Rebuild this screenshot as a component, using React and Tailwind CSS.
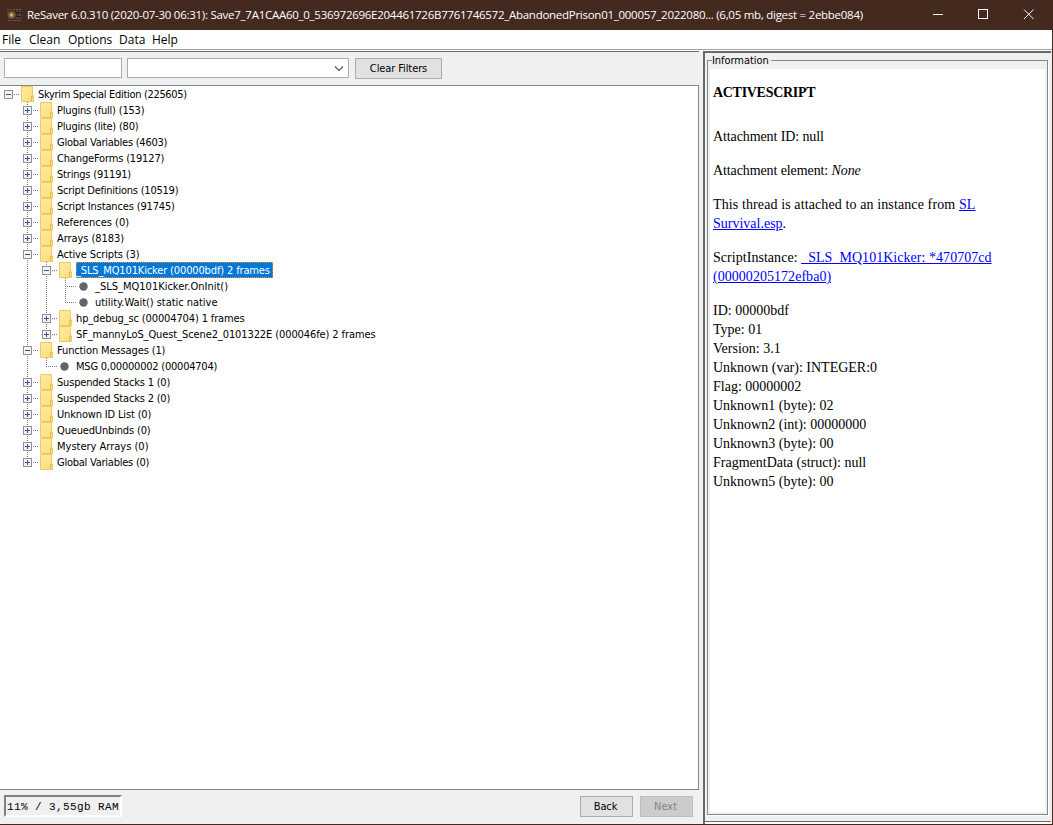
import React from "react";
import clsx from "clsx";

// guides: which ancestor columns keep a vertical line running through the row
const rows = [
  { level: 0, open: true, last: true, label: "Skyrim Special Edition (225605)", track: "tracking-[-0.32px]" },
  { level: 1, label: "Plugins (full) (153)", track: "tracking-[-0.2px]" },
  { level: 1, label: "Plugins (lite) (80)", track: "tracking-[-0.2px]" },
  { level: 1, label: "Global Variables (4603)", track: "tracking-[-0.25px]" },
  { level: 1, label: "ChangeForms (19127)", track: "tracking-[-0.16px]" },
  { level: 1, label: "Strings (91191)", track: "tracking-[-0.2px]" },
  { level: 1, label: "Script Definitions (10519)", track: "tracking-[-0.23px]" },
  { level: 1, label: "Script Instances (91745)", track: "tracking-[-0.15px]" },
  { level: 1, label: "References (0)" },
  { level: 1, label: "Arrays (8183)", track: "tracking-[-0.06px]" },
  { level: 1, open: true, label: "Active Scripts (3)", track: "tracking-[-0.13px]" },
  { level: 2, open: true, selected: true, guides: [1], label: "_SLS_MQ101Kicker (00000bdf) 2 frames", track: "tracking-[-0.14px]" },
  { level: 3, leaf: true, guides: [1, 2], label: "_SLS_MQ101Kicker.OnInit()" },
  { level: 3, leaf: true, last: true, guides: [1, 2], label: "utility.Wait() static native", track: "tracking-[-0.04px]" },
  { level: 2, guides: [1], label: "hp_debug_sc (00004704) 1 frames", track: "tracking-[-0.13px]" },
  { level: 2, last: true, guides: [1], label: "SF_mannyLoS_Quest_Scene2_0101322E (000046fe) 2 frames", track: "tracking-[-0.1px]" },
  { level: 1, open: true, label: "Function Messages (1)", track: "tracking-[-0.12px]" },
  { level: 2, leaf: true, last: true, guides: [1], label: "MSG 0,00000002 (00004704)", track: "tracking-[-0.22px]" },
  { level: 1, label: "Suspended Stacks 1 (0)", track: "tracking-[-0.19px]" },
  { level: 1, label: "Suspended Stacks 2 (0)", track: "tracking-[-0.19px]" },
  { level: 1, label: "Unknown ID List (0)", track: "tracking-[-0.16px]" },
  { level: 1, label: "QueuedUnbinds (0)", track: "tracking-[-0.16px]" },
  { level: 1, label: "Mystery Arrays (0)" },
  { level: 1, last: true, label: "Global Variables (0)", track: "tracking-[-0.24px]" },
];

const fields = [
  "ID: 00000bdf",
  "Type: 01",
  "Version: 3.1",
  "Unknown (var): INTEGER:0",
  "Flag: 00000002",
  "Unknown1 (byte): 02",
  "Unknown2 (int): 00000000",
  "Unknown3 (byte): 00",
  "FragmentData (struct): null",
  "Unknown5 (byte): 00",
];

const menus = [
  { name: "File", style: "w-[27px]" },
  { name: "Clean", style: "w-[39px]" },
  { name: "Options", style: "w-[51px]" },
  { name: "Data", style: "w-[33px]" },
  { name: "Help", style: "w-[30px]" },
];

function Dots({ d }) {
  return <path d={d} stroke="#808080" strokeDasharray="1 1" fill="none" />;
}

function Guide({ on }) {
  return (
    <svg width="19" height="16" shapeRendering="crispEdges" className="shrink-0">
      {on && <Dots d="M8.5 0V16" />}
    </svg>
  );
}

function Toggle({ row }) {
  return (
    <svg width="19" height="16" shapeRendering="crispEdges" className="shrink-0">
      {row.level > 0 && <Dots d={row.last ? "M8.5 0V9" : "M8.5 0V16"} />}
      {row.leaf ? (
        <Dots d="M10 8.5H19" />
      ) : (
        <>
          <Dots d="M14 8.5H19" />
          <rect x="4.5" y="4.5" width="8" height="8" fill="#f4f4f4" stroke="#919191" />
          <path d="M6 8.5H11" stroke="#33519c" />
          {!row.open && <path d="M8.5 6V11" stroke="#33519c" />}
        </>
      )}
    </svg>
  );
}

function NodeIcon({ leaf }) {
  if (leaf) {
    return (
      <svg width="19" height="16" className="shrink-0">
        <circle cx="7.5" cy="8.5" r="4.2" fill="#636363" />
      </svg>
    );
  }
  return (
    <svg width="19" height="16" className="shrink-0">
      <defs>
        <linearGradient id="folder" x1="0" y1="0" x2="1" y2="1">
          <stop offset="0" stopColor="#ffeba6" />
          <stop offset="1" stopColor="#ffdc7a" />
        </linearGradient>
      </defs>
      <path d="M2.5 0.5H13.5V9.5H14.5V15.5H2.5Z" fill="url(#folder)" stroke="#edca5c" />
      <path d="M12.5 15V10.5H14" fill="none" stroke="#e3bb48" />
    </svg>
  );
}

function TreeRow({ row }) {
  return (
    <div className="flex h-4 items-center">
      {Array.from({ length: row.level }, (_, i) => (
        <Guide key={i} on={row.guides?.includes(i)} />
      ))}
      <Toggle row={row} />
      <NodeIcon leaf={row.leaf} />
      <span
        className={clsx(
          "h-4 whitespace-pre leading-[17px]",
          row.track,
          row.selected &&
            "w-[197px] bg-[#0078d7] text-white outline-1 -outline-offset-1 outline-dotted outline-[#ff8728]"
        )}
      >
        {row.label}
      </span>
    </div>
  );
}

function TitleBar() {
  return (
    <div className="flex h-[30px] shrink-0 items-center bg-[#44291f] text-white">
      <svg width="16" height="14" viewBox="0 0 16 14" className="ml-1.5 shrink-0">
        <path d="M1 1.5H15M0.5 4H15.5M1 7H15M1 10H15.5M2 12.5H15" stroke="#6f665a" strokeDasharray="2 1" />
        <circle cx="5.5" cy="7" r="5" fill="#6b4d2c" stroke="#2a211b" />
        <circle cx="5.5" cy="7" r="2.4" fill="#a08358" />
        <circle cx="5.5" cy="7" r="1" fill="#e0d2b4" />
        <path d="M10 4.5H14M11 8.5H15" stroke="#1f1a17" />
      </svg>
      <div className="ml-[5px] w-[840px] whitespace-nowrap font-['Open_Sans',sans-serif] text-[11.5px] tracking-[-0.27px]">
        ReSaver 6.0.310 (2020-07-30 06:31): Save7_7A1CAA60_0_536972696E204461726B7761746572_AbandonedPrison01_000057_2022080... (6,05 mb, digest = 2ebbe084)
      </div>
      <svg width="120" height="30" className="ml-auto mr-[11px] shrink-0" stroke="white" fill="none">
        <path d="M12 14.5H22" />
        <rect x="57.5" y="9.5" width="9" height="9" />
        <path d="M103 9.5L112.5 19M112.5 9.5L103 19" />
      </svg>
    </div>
  );
}

function Information() {
  return (
    <div className="ml-1 flex w-[348px] flex-col border-l-2 border-t-2 border-[#696969] bg-[#f0f0f0]">
      <div className="relative ml-0.5 mr-[3px] mt-[7px] flex h-[755px] shrink-0 flex-col border border-[#828790] px-0.5 pb-0.5 pt-2 shadow-[1px_1px_0_white]">
        <div className="absolute -top-2 left-1 bg-[#f0f0f0] pr-0.5 text-[11px] leading-4 tracking-[-0.05px]">Information</div>
        <div className="flex-1 bg-white pl-[3px] pt-3.5 font-['Liberation_Serif',serif] text-[14px] leading-[19px]">
          <h1 className="mb-[25px] font-bold tracking-[-0.3px]">ACTIVESCRIPT</h1>
          <p className="mb-[15px] tracking-[-0.1px]">Attachment ID: null</p>
          <p className="mb-[15px] tracking-[-0.1px]">
            Attachment element: <i>None</i>
          </p>
          <p className="mb-[15px] tracking-[0.11px]">
            This thread is attached to an instance from{" "}
            <a className="text-[#0000ff] underline">
              SL
              <br />
              <span className="tracking-normal">Survival.esp</span>
            </a>
            .
          </p>
          <p className="mb-[15px] tracking-[0.04px]">
            ScriptInstance:{" "}
            <a className="text-[#0000ff] underline">
              _SLS_MQ101Kicker: *470707cd
              <br />
              (00000205172efba0)
            </a>
          </p>
          {fields.map((f) => (
            <div key={f}>{f}</div>
          ))}
        </div>
      </div>
      <div className="mt-[6px] h-px bg-[#696969]" />
      <div className="flex-1 bg-white" />
    </div>
  );
}

export default function App() {
  return (
    <div className="flex h-[825px] w-[1053px] flex-col overflow-hidden border-b border-r border-[#44291f] bg-[#f0f0f0] font-['DejaVu_Sans_Condensed','DejaVu_Sans',sans-serif] text-[11px] text-black">
      <TitleBar />
      <div className="flex h-5 shrink-0 items-center border-b border-[#a0a0a0] bg-white pl-0.5 font-['Open_Sans',sans-serif] text-xs">
        {menus.map((m) => (
          <div key={m.name} className={clsx("shrink-0 whitespace-nowrap", m.style)}>
            {m.name}
          </div>
        ))}
      </div>
      <div className="h-px shrink-0 bg-white" />
      <div className="flex min-h-0 flex-1">
        <div className="flex w-[699px] shrink-0 flex-col border-t border-[#696969]">
          <div className="flex h-[33px] shrink-0 items-start pl-1 pt-1.5">
            <input className="h-5 w-[118px] border border-[#abadb3] bg-white" />
            <div className="ml-[5px] flex h-5 w-[222px] items-center justify-end border border-[#abadb3] bg-white pr-1">
              <svg width="10" height="6" className="mt-0.5" fill="none" stroke="#555">
                <path d="M1 0.5L5 4.5L9 0.5" strokeWidth="1.2" />
              </svg>
            </div>
            <button className="ml-1.5 h-[21px] w-[87px] border border-[#adadad] bg-[#e1e1e1] pt-px tracking-[-0.1px]">
              Clear Filters
            </button>
          </div>
          <div className="h-[705px] shrink-0 border-y border-r border-[#828790] bg-white">
            {rows.map((row, i) => (
              <TreeRow key={i} row={row} />
            ))}
          </div>
          <div className="flex flex-1 items-start pl-1 pt-[5px]">
            <div className="h-[22px] w-[118px] border-2 border-b-white border-l-[#808080] border-r-white border-t-[#808080] pl-px font-['Liberation_Mono',monospace] text-[11px] leading-5 tracking-[0.4px]">
              <span className="whitespace-nowrap">11% / 3,55gb RAM</span>
            </div>
            <button className="ml-[458px] mt-px h-[21px] w-[53px] border border-[#adadad] bg-[#e1e1e1] pt-px pr-0.5 tracking-[-0.1px]">
              Back
            </button>
            <button className="ml-[7px] mt-px h-[21px] w-[53px] border border-[#bfbfbf] bg-[#cccccc] pt-px pr-0.5 text-[#838383]">
              Next
            </button>
          </div>
        </div>
        <Information />
      </div>
    </div>
  );
}
